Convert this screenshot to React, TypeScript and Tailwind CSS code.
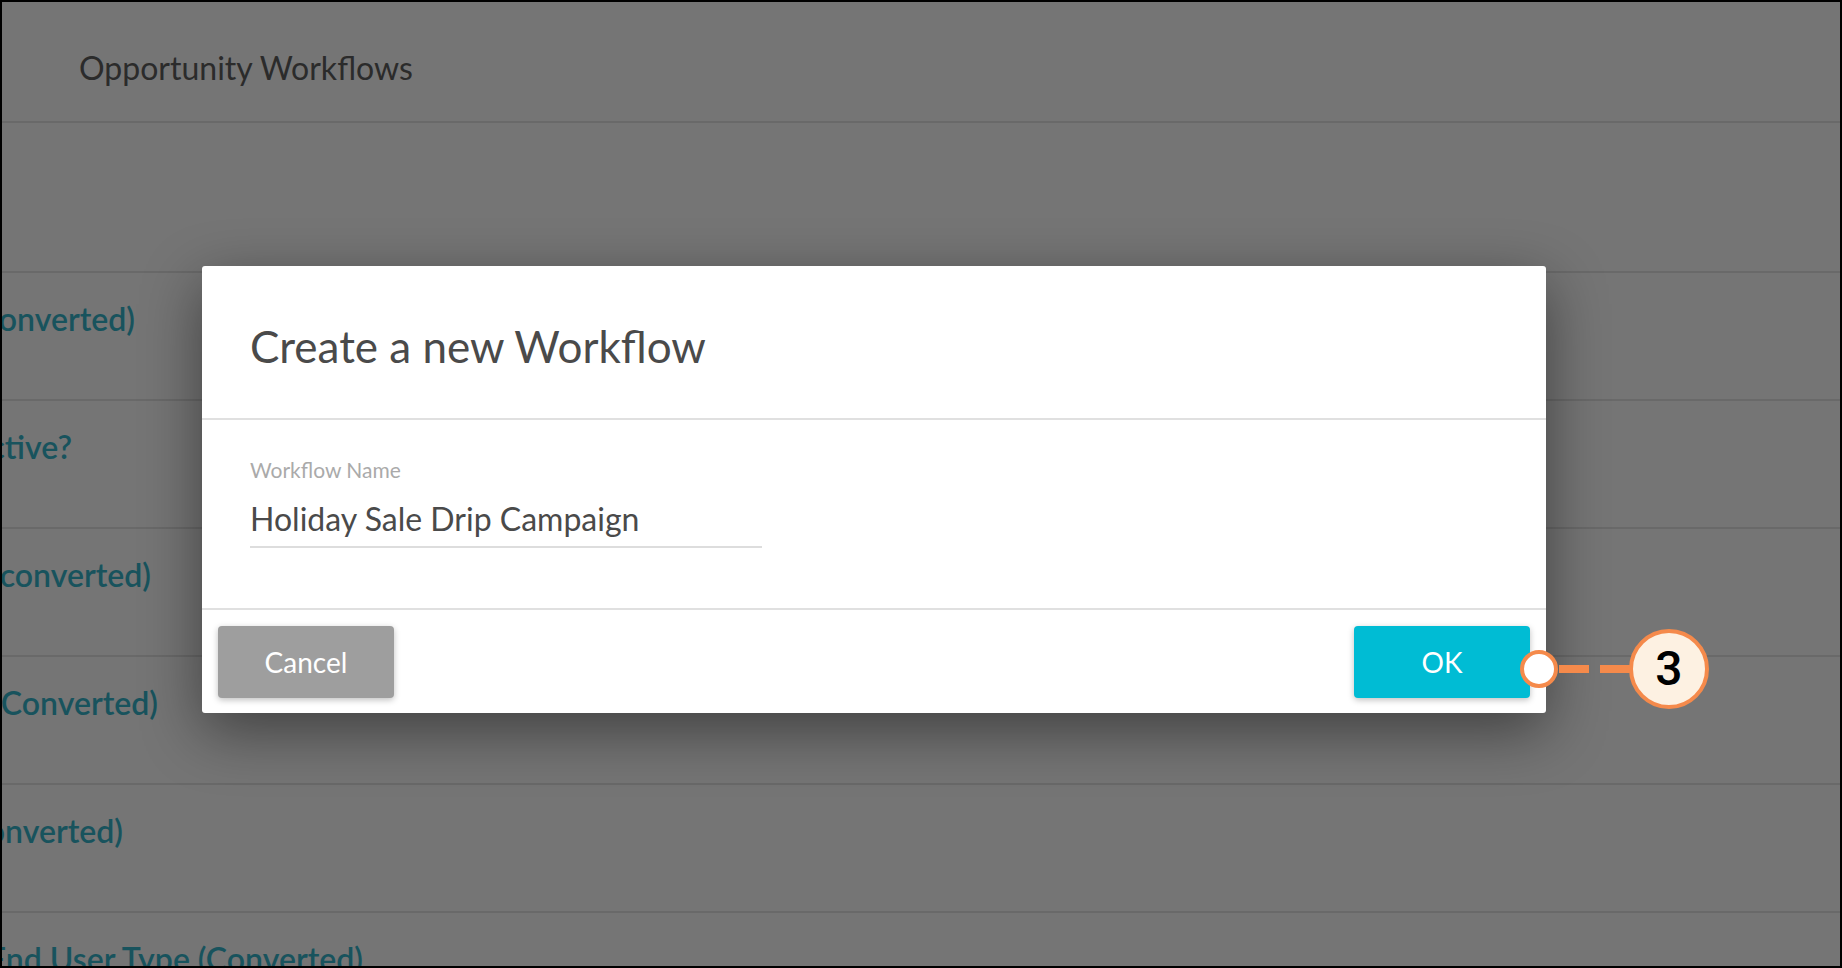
import React from 'react';

const rows = [
  { text: 'Lead Source (Converted)', width: 'w-[133px]' },
  { text: 'Is Active?', width: 'w-[70px]' },
  { text: 'Opportunity Stage (converted)', width: 'w-[149px]' },
  { text: 'Lead Status (Converted)', width: 'w-[156px]' },
  { text: 'Campaign (Converted)', width: 'w-[121px]' },
  { text: 'End User Type (Converted)', width: 'w-[361px]' },
];

export default function App() {
  return (
    <div className="relative h-[968px] w-[1842px] overflow-hidden border-2 border-black bg-[#757575] font-['Lato','Liberation_Sans',sans-serif]">
      {/* page behind the overlay */}
      <div className="h-[121px] border-b-2 border-[#696969] pl-[77px] pt-[47px]">
        <h1 className="text-[32px] leading-[1.2] text-[#2b2b2b]">Opportunity Workflows</h1>
      </div>
      <div className="h-[150px] border-b-2 border-[#696969]" />
      {rows.map((row) => (
        <div key={row.text} className="h-[128px] shrink-0 border-b-2 border-[#696969] pt-[27px]">
          <div className={`flex justify-end ${row.width}`}>
            <span className="shrink-0 whitespace-nowrap text-[32px] font-semibold leading-[1.2] text-[#18535d]">
              {row.text}
            </span>
          </div>
        </div>
      ))}

      {/* modal */}
      <div className="absolute left-[200px] top-[264px] flex h-[447px] w-[1344px] flex-col rounded-[3px] bg-white shadow-[0_18px_60px_rgba(0,0,0,0.45)]">
        <div className="h-[154px] shrink-0 border-b-2 border-[#e0e0e0] pl-[48px] pt-[54px]">
          <h2 className="text-[44px] leading-[1.2] text-[#4a4a4a]">Create a new Workflow</h2>
        </div>
        <div className="h-[190px] shrink-0 border-b-2 border-[#e0e0e0] pl-[48px] pt-[37px]">
          <label className="block text-[21px] leading-[1.2] text-[#aaaaaa]">Workflow Name</label>
          <div className="mt-[18px] w-[512px] border-b-2 border-[#dddddd] pb-[7px] text-[32px] leading-[1.2] text-[#4a4a4a]">
            Holiday Sale Drip Campaign
          </div>
        </div>
        <div className="flex flex-1 items-center justify-between px-4">
          <button className="flex h-[72px] w-[176px] items-center justify-center rounded-[4px] bg-[#9e9e9e] text-[28px] text-white shadow-[0_2px_6px_rgba(0,0,0,0.25)]">
            Cancel
          </button>
          <button className="flex h-[72px] w-[176px] items-center justify-center rounded-[4px] bg-[#00bcd4] text-[28px] text-white shadow-[0_2px_6px_rgba(0,0,0,0.25)]">
            OK
          </button>
        </div>
      </div>

      {/* callout */}
      <div className="absolute left-[1518px] top-[627px] flex items-center">
        <div className="h-[38px] w-[38px] rounded-full border-[4px] border-[#f58a4b] bg-white" />
        <div className="ml-[1px] h-[8px] w-[30px] bg-[#f58a4b]" />
        <div className="ml-[11px] h-[8px] w-[30px] bg-[#f58a4b]" />
        <div className="-ml-[1px] flex h-[80px] w-[80px] items-center justify-center rounded-full border-[4px] border-[#f58a4b] bg-[#fdf1e2] font-['Roboto',sans-serif] text-[48px] font-medium text-black">
          3
        </div>
      </div>
    </div>
  );
}
